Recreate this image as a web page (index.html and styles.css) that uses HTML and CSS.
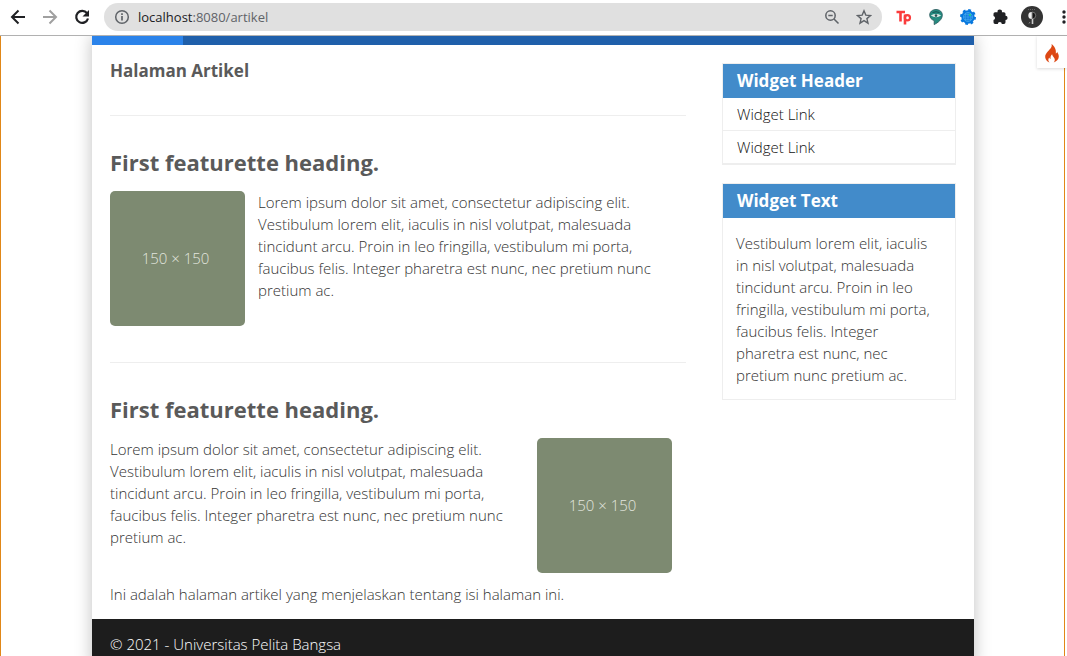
FILE: index.html
```html
<!DOCTYPE html>
<html lang="id">
<head>
<meta charset="utf-8">
<meta name="viewport" content="width=device-width, initial-scale=1">
<title>Halaman Artikel</title>
<link rel="stylesheet" href="styles.css">
</head>
<body>
<div class="browser">
  <header class="toolbar">
    <div class="nav-buttons">
      <button class="icon-button" type="button" aria-label="Back"><svg width="16" height="16" viewBox="0 0 16 16" fill="none" stroke="#202124" stroke-width="2"><path d="M15 8H2M8.500 1.500 2 8l6.500 6.500"/></svg></button>
      <button class="icon-button" type="button" aria-label="Forward"><svg width="16" height="16" viewBox="0 0 16 16" fill="none" stroke="#a0a0a0" stroke-width="2"><path d="M1 8h13M7.500 1.500 14 8l-6.500 6.500"/></svg></button>
      <button class="icon-button" type="button" aria-label="Reload"><svg width="16" height="16" viewBox="0 0 16 16"><path d="M13 4.200A6 6 0 1 0 14 9.500" fill="none" stroke="#202124" stroke-width="2.200"/><path d="M15 1v6.500H8.500z" fill="#202124"/></svg></button>
    </div>
    <div class="address">
      <svg width="16" height="16" viewBox="0 0 16 16" fill="none" stroke="#5f6368" stroke-width="1.500"><circle cx="8" cy="8" r="6.300"/><path d="M8 7v4.500M8 4.300v1.600" stroke-width="1.700"/></svg>
      <div class="url"><span class="host">localhost</span>:8080/artikel</div>
      <button class="icon-button" type="button" aria-label="Zoom"><svg width="16" height="16" viewBox="0 0 16 16" fill="none" stroke="#5f6368" stroke-width="1.500"><circle cx="6.500" cy="6.500" r="4.700"/><path d="M4.300 6.500h4.400M10 10l4.500 4.500"/></svg></button>
      <button class="icon-button" type="button" aria-label="Bookmark"><svg width="16" height="16" viewBox="0 0 16 16" fill="none" stroke="#5f6368" stroke-width="1.400"><path d="m8 1.800 1.800 4.300 4.700.4-3.600 3.100 1.100 4.600L8 11.700l-4 2.500 1.100-4.600-3.600-3.100 4.700-.4z"/></svg></button>
    </div>
    <div class="extensions">
      <button class="icon-button" type="button" aria-label="Tp"><svg width="16" height="16" viewBox="0 0 16 16" fill="none" stroke="#fa3c3c" stroke-width="2.600"><path d="M.5 3h8.500M4.500 3v9.500"/><path d="M9 5.500v10"/><circle cx="11.400" cy="8.700" r="2.600" stroke-width="2.200"/></svg></button>
      <button class="icon-button" type="button" aria-label="Eye pin"><svg width="16" height="16" viewBox="0 0 16 16"><path d="M8 .5C4.200.5 1.700 2.900 1.700 6c0 3 2 4.700 4.500 5.600v4c3.600-2 8.100-4.800 8.100-9.600C14.300 2.900 11.800.5 8 .5z" fill="#258b80" stroke="#28575a" stroke-width=".8"/><path d="M2.800 6.500Q8 3.700 13.200 6.500 8 9.800 2.800 6.500z" fill="#dceae5"/><circle cx="8" cy="6.600" r="1.300" fill="#284f54"/><path d="M4.500 3.500q3.500-1.500 7 0" fill="none" stroke="#174f50"/></svg></button>
      <button class="icon-button" type="button" aria-label="Globe gear"><svg width="16" height="16" viewBox="0 0 16 16"><circle cx="8" cy="8" r="6.700" fill="#0878de"/><circle cx="8" cy="8" r="7" fill="none" stroke="#0878de" stroke-width="2" stroke-dasharray="2.750 2.750"/><circle cx="8" cy="8" r="4.500" fill="none" stroke="#58b6f0" stroke-width=".6"/><path d="M3.500 8h9M4.500 5.700h7M4.500 10.300h7M8 3.500v9M6 4q-2 4 0 8M10 4q2 4 0 8" fill="none" stroke="#58b6f0" stroke-width=".5"/><circle cx="10" cy="6" r="1" fill="#19df79"/></svg></button>
      <button class="icon-button" type="button" aria-label="Extensions"><svg width="16" height="16" viewBox="0 0 16 16"><path d="M1.500 4.800q0-1.600 1.600-1.600h2.500a2.200 2.200 0 1 1 4.300 0h2q1.600 0 1.600 1.600v2a2.100 2.100 0 1 1 0 4.200v2.300q0 1.600-1.600 1.600H9.800a2 2 0 0 0-4 0H3.100q-1.600 0-1.600-1.600v-2.400a2 2 0 0 0 0-3.900z" fill="#202124"/></svg></button>
      <button class="icon-button avatar" type="button" aria-label="Profile"><svg width="22" height="22" viewBox="0 0 22 22"><circle cx="11" cy="11" r="11" fill="#343434"/><path d="M7 3.500h8" stroke="#666" stroke-dasharray="1 1"/><path d="M10.800 6a3 3 0 0 0 0 7z" fill="#eee"/><path d="M11.200 6a3 3 0 0 1 0 7z" fill="#151515" stroke="#aaa" stroke-width=".6"/><path d="M11.500 13v5" stroke="#ccc" stroke-width="1.600"/><path d="M8 17.500l1-1.500" stroke="#888"/></svg></button>
    </div>
    <button class="icon-button menu" type="button" aria-label="Menu"><svg width="4" height="16" viewBox="0 0 4 16" fill="#202124"><circle cx="2" cy="3" r="1.700"/><circle cx="2" cy="8" r="1.700"/><circle cx="2" cy="13" r="1.700"/></svg></button>
  </header>
  <div class="viewport">
    <button class="debug" type="button" aria-label="Debug toolbar"><svg width="14" height="19" viewBox="0 0 14 19"><path d="M6.500 0c1 3.200-1.400 4.900-3.500 7.300C1.200 9.300 0 11 .2 13.200c.3 2.600 2 4.400 4.300 5.300-1.500-1.600-1.600-3.500-.2-5 .3 1 .7 1.300 1.300 1.600-.3-2.100.2-3.500 1.500-4.800.2 2.400 2.700 3.300 2.700 5.500 0 1.100-.5 2-1.200 2.700 2.900-1 5-3 5.200-5.800.1-2-.9-3.500-1.700-5-.2 1-.6 1.500-1.300 1.800C11.500 5.500 9.300 2 6.500 0z" fill="#dd4814"/></svg></button>
    <div class="container">
      <nav class="site-nav" aria-label="Main"><a class="active" href="#" aria-label="Home"></a></nav>
      <div class="wrapper">
        <main>
          <h1>Halaman Artikel</h1>
          <hr>
          <article>
            <h2>First featurette heading.</h2>
            <div class="feature">
              <div class="thumb" role="img" aria-label="150 × 150">150 × 150</div>
              <p>Lorem ipsum dolor sit amet, consectetur adipiscing elit. Vestibulum lorem elit, iaculis in nisl volutpat, malesuada tincidunt arcu. Proin in leo fringilla, vestibulum mi porta, faucibus felis. Integer pharetra est nunc, nec pretium nunc pretium ac.</p>
            </div>
          </article>
          <hr class="divider">
          <article>
            <h2>First featurette heading.</h2>
            <div class="feature">
              <p>Lorem ipsum dolor sit amet, consectetur adipiscing elit. Vestibulum lorem elit, iaculis in nisl volutpat, malesuada tincidunt arcu. Proin in leo fringilla, vestibulum mi porta, faucibus felis. Integer pharetra est nunc, nec pretium nunc pretium ac.</p>
              <div class="thumb" role="img" aria-label="150 × 150">150 × 150</div>
            </div>
          </article>
          <p class="closing">Ini adalah halaman artikel yang menjelaskan tentang isi halaman ini.</p>
        </main>
        <aside>
          <section class="widget">
            <h3>Widget Header</h3>
            <ul>
              <li><a href="#">Widget Link</a></li>
              <li><a href="#">Widget Link</a></li>
            </ul>
          </section>
          <section class="widget">
            <h3>Widget Text</h3>
            <p>Vestibulum lorem elit, iaculis in nisl volutpat, malesuada tincidunt arcu. Proin in leo fringilla, vestibulum mi porta, faucibus felis. Integer pharetra est nunc, nec pretium nunc pretium ac.</p>
          </section>
        </aside>
      </div>
      <footer>© 2021 - Universitas Pelita Bangsa</footer>
    </div>
  </div>
</div>
</body>
</html>
```

FILE: styles.css
```css
* { box-sizing: border-box; }

body {
  margin: 0;
  font-family: "Open Sans", sans-serif;
  font-size: 15px;
  font-weight: 300;
  line-height: 22px;
  color: #333;
  background: #fff;
}

h1, h2, h3, p, ul { margin: 0; }

h1, h2 { color: #5a5a5a; }

.browser {
  display: flex;
  flex-direction: column;
  height: 100vh;
  overflow: hidden;
}

/* Browser toolbar */
.toolbar {
  display: flex;
  flex: none;
  align-items: center;
  height: 36px;
  padding: 0 0 2px 10px;
  border-bottom: 1px solid #b1b1b1;
  overflow: hidden;
}

.icon-button {
  display: flex;
  flex: none;
  padding: 0;
  border: 0;
  background: none;
}

.nav-buttons {
  display: flex;
  gap: 16px;
  margin-right: 14px;
}

.address {
  display: flex;
  flex: 1;
  align-items: center;
  gap: 16px;
  height: 28px;
  padding: 0 10px;
  border-radius: 14px;
  background: #e0e0e0;
}

.url {
  flex: 1;
  margin-left: -8px;
  font-size: 13px;
  font-weight: 400;
  color: #5f6368;
}

.host { color: #202124; }

.extensions {
  display: flex;
  align-items: center;
  gap: 16px;
  margin-left: 14px;
}

.avatar { margin-left: -3px; }

.menu {
  margin-left: 19px;
  margin-right: 1px;
}

/* Page area */
.viewport {
  position: relative;
  flex: 1;
  min-height: 0;
  margin-right: 2px;
  padding: 0 90px 0 91px;
  border: solid #e08718;
  border-width: 0 1px;
}

.debug {
  position: absolute;
  top: 0;
  right: -3px;
  display: flex;
  align-items: center;
  justify-content: center;
  width: 30px;
  height: 32px;
  padding: 2px 0 0;
  border: 0;
  background: #fff;
  box-shadow: 0 1px 3px rgba(0, 0, 0, 0.15);
}

.container {
  display: flex;
  flex-direction: column;
  max-width: 882px;
  min-height: 100%;
  margin: 0 auto;
  box-shadow: 0 0 16px rgba(0, 0, 0, 0.25);
  clip-path: inset(0 -20px);
}

.site-nav {
  display: flex;
  height: 9px;
  background: #1f5faa;
}

.site-nav .active {
  width: 91px;
  background: #2b83ea;
}

.wrapper {
  display: grid;
  grid-template-columns: minmax(0, 1fr) 234px;
  gap: 36px;
  padding: 0 18px 14px;
}

h1 {
  padding: 14px 0 32px;
  font-size: 17px;
  line-height: 24px;
}

hr {
  margin: 0;
  border: 0;
  border-top: 1px solid #eee;
}

.divider { margin-top: 36px; }

h2 {
  padding: 31px 0 14px;
  font-size: 22px;
  line-height: 30px;
}

.feature {
  display: flex;
  gap: 13px;
  padding-right: 14px;
}

.feature p {
  flex: 1;
  min-width: 0;
}

.thumb {
  display: flex;
  flex: none;
  align-items: center;
  justify-content: center;
  width: 135px;
  height: 135px;
  padding: 0 4px 2px 0;
  border-radius: 5px;
  background: #7d8a71;
  color: #e2e6df;
}

.closing { margin-top: 10px; }

aside {
  display: flex;
  flex-direction: column;
  gap: 18px;
  padding-top: 18px;
}

.widget { border: 1px solid #eee; }

.widget h3 {
  padding: 5px 14px;
  font-size: 17px;
  line-height: 24px;
  color: #fff;
  background: #428bca;
}

.widget ul {
  padding: 0;
  list-style: none;
}

.widget li { border-bottom: 1px solid #eee; }

.widget a {
  display: block;
  padding: 5px 14px;
  color: #111;
  text-decoration: none;
}

.widget p { padding: 14px 20px 13px 13px; }

footer {
  flex: 1;
  padding: 14px 18px;
  color: #fff;
  background: #1d1d1d;
}
```
